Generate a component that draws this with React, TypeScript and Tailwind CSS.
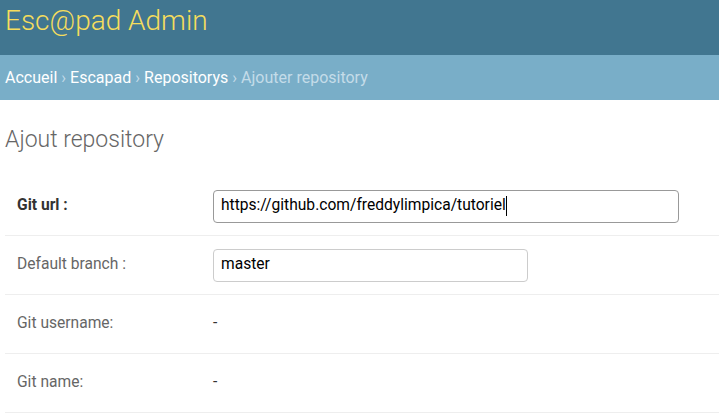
import React from 'react';

const crumbs = ['Accueil', 'Escapad', 'Repositorys'];

function TextBox({ value, width, focused }: { value: string; width: string; focused?: boolean }) {
  return (
    <div
      className={`${width} h-[33px] flex items-center px-[7px] rounded-[4px] border text-[15.6px] text-black ${
        focused ? 'border-[#999]' : 'border-[#ccc]'
      }`}
    >
      <span>{value}</span>
      {focused && <span className="w-px h-[20px] bg-black" />}
    </div>
  );
}

function Row({ label, required, children }: { label: string; required?: boolean; children: React.ReactNode }) {
  return (
    <div className="h-[59px] flex items-center border-b border-[#eee]">
      <label
        className={`w-[208px] shrink-0 pl-[12px] text-[15.6px] ${
          required ? 'font-bold text-[#333]' : 'text-[#666]'
        }`}
      >
        {label}
      </label>
      {children}
    </div>
  );
}

export default function App() {
  return (
    <div className="w-[719px] h-[414px] overflow-hidden bg-white font-['Roboto',sans-serif]">
      <div className="h-[55px] bg-[#417690] pl-[5px] pt-[4px]">
        <h1 className="text-[28px] leading-[34px] font-light text-[#f5dd5d]">Esc@pad Admin</h1>
      </div>

      <div className="h-[45px] bg-[#79aec8] pl-[5px] flex items-center text-[16px] text-[#c4dce8]">
        {crumbs.map((c) => (
          <React.Fragment key={c}>
            <a href="#" className="text-white">{c}</a>
            <span className="px-[4px]">›</span>
          </React.Fragment>
        ))}
        <span>Ajouter repository</span>
      </div>

      <div className="pl-[5px]">
        <h2 className="mt-[26px] mb-[23px] text-[23px] leading-[28px] font-light text-[#666]">Ajout repository</h2>

        <Row label="Git url :" required>
          <TextBox value="https://github.com/freddylimpica/tutoriel" width="w-[466px]" focused />
        </Row>
        <Row label="Default branch :">
          <TextBox value="master" width="w-[315px]" />
        </Row>
        <Row label="Git username:">
          <span className="text-[15.6px] text-[#333]">-</span>
        </Row>
        <Row label="Git name:">
          <span className="text-[15.6px] text-[#333]">-</span>
        </Row>
      </div>
    </div>
  );
}
